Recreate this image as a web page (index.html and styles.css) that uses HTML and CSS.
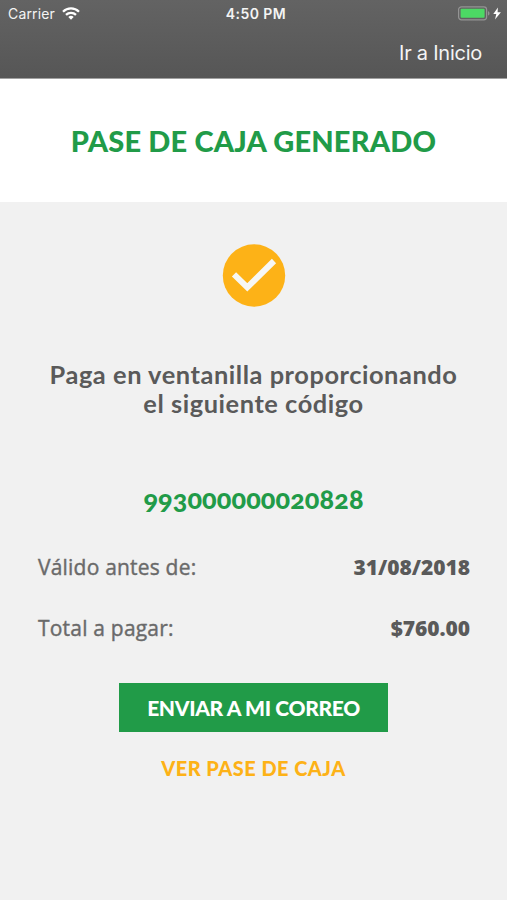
FILE: index.html
```html
<!DOCTYPE html>
<html lang="es">
<head>
    <meta charset="UTF-8">
    <meta name="viewport" content="width=device-width, initial-scale=1.0">
    <title>Pase de caja generado</title>
    <link rel="stylesheet" href="styles.css">
</head>
<body>
    <header class="topbar">
        <div class="status">
            <div class="carrier">
                <span>Carrier</span>
                <svg class="wifi" width="18" height="13" viewBox="0 0 18 13">
                    <g fill="none" stroke="#fff" stroke-width="2.3">
                        <path d="M1 4.7a11.4 11.4 0 0 1 16 0"/>
                        <path d="M4 7.8a7.2 7.2 0 0 1 10 0"/>
                    </g>
                    <path d="M6.3 10a3.9 3.9 0 0 1 5.4 0L9 12.8z" fill="#fff"/>
                </svg>
            </div>
            <div class="time">4:50 PM</div>
            <div class="power">
                <svg width="44" height="15" viewBox="0 0 44 15">
                    <rect x=".6" y=".8" width="28" height="13" rx="2.8" fill="none" stroke="#949494" stroke-width="1.2"/>
                    <rect x="2.6" y="2.8" width="24" height="9" rx="1" fill="#4cd964"/>
                    <path d="M30 5.2c2 .6 2 3.8 0 4.4z" fill="#949494"/>
                    <path d="M39.9 1.4L35.3 8h3l-1.3 5.6L42.9 6.3h-3.3z" fill="#fff"/>
                </svg>
            </div>
        </div>
        <nav class="nav">
            <a class="home">Ir a Inicio</a>
        </nav>
    </header>

    <div class="title">
        <h1>PASE DE CAJA GENERADO</h1>
    </div>

    <main class="content">
        <svg class="check" width="64" height="64" viewBox="0 0 64 64">
            <circle cx="32" cy="31.5" r="31.2" fill="#fdb217"/>
            <path d="M12 30.3L25.3 43.3 52 17" fill="none" stroke="#f7f7f5" stroke-width="6"/>
        </svg>
        <p class="message">
            Paga en ventanilla proporcionando<br>
            el siguiente código
        </p>
        <div class="code">993000000020828</div>
        <div class="row">
            <span class="label">Válido antes de:</span>
            <span class="value">31/08/2018</span>
        </div>
        <div class="row">
            <span class="label">Total a pagar:</span>
            <span class="value">$760.00</span>
        </div>
        <button class="send">ENVIAR A MI CORREO</button>
        <a class="view">VER PASE DE CAJA</a>
    </main>
</body>
</html>
```
FILE: styles.css
```css
* {
    box-sizing: border-box;
}

body {
    margin: 0;
    min-height: 900px;
    background: #f1f1f1;
    color: #5a5a5a;
    font-family: Lato, sans-serif;
}

.topbar {
    height: 79px;
    background: linear-gradient(#636363, #565656);
    border-bottom: 1px solid #a0a0a0;
    color: #f4f4f4;
    font-family: Inter, sans-serif;
}

.status {
    display: grid;
    grid-template-columns: 1fr auto 1fr;
    align-items: center;
    height: 27px;
    padding: 0 5px 0 8px;
}

.carrier {
    display: flex;
    align-items: center;
    gap: 7px;
    font-size: 14px;
    letter-spacing: 0.15px;
}

.time {
    padding-left: 2px;
    font-size: 14px;
    font-weight: 600;
    letter-spacing: 0.45px;
}

.power {
    display: flex;
    justify-content: flex-end;
}

.nav {
    display: flex;
    justify-content: flex-end;
    padding: 13px 25px 0 0;
}

.home {
    font-size: 20px;
    line-height: 26px;
    letter-spacing: -0.25px;
}

.title {
    height: 123px;
    padding-top: 44px;
    background: #fff;
    text-align: center;
}

h1 {
    margin: 0;
    color: #219b48;
    font-size: 29px;
    font-weight: 900;
    letter-spacing: 0.18px;
    line-height: 36px;
    white-space: nowrap;
}

.content {
    display: flex;
    flex-direction: column;
    align-items: center;
    padding: 42px 37px 0;
}

.message {
    margin: 52px 0 0;
    font-size: 25.4px;
    font-weight: 700;
    letter-spacing: 0.55px;
    line-height: 28.5px;
    text-align: center;
    white-space: nowrap;
}

.code {
    margin: 67px 0 38px;
    color: #219b48;
    font-size: 27px;
    font-weight: 900;
    font-variant-numeric: oldstyle-nums;
    letter-spacing: 0.1px;
    line-height: 30px;
}

.row {
    display: flex;
    justify-content: space-between;
    width: 100%;
    height: 30px;
    margin-bottom: 31px;
    font-family: "Open Sans", sans-serif;
    font-size: 21px;
    line-height: 30px;
}

.label {
    padding-left: 1px;
    color: #6a6a6a;
    letter-spacing: 0.2px;
    -webkit-text-stroke: 0.4px #6a6a6a;
}

.value {
    font-weight: 800;
    letter-spacing: -0.05px;
}

.send {
    width: 269px;
    height: 49px;
    margin-top: 9px;
    padding: 0 0 1px;
    border: 0;
    background: #219b48;
    color: #fff;
    font-family: inherit;
    font-size: 21px;
    font-weight: 900;
    letter-spacing: -0.35px;
}

.view {
    margin-top: 21px;
    color: #fdb217;
    font-size: 20px;
    font-weight: 900;
    letter-spacing: 0.45px;
    line-height: 30px;
}
```
